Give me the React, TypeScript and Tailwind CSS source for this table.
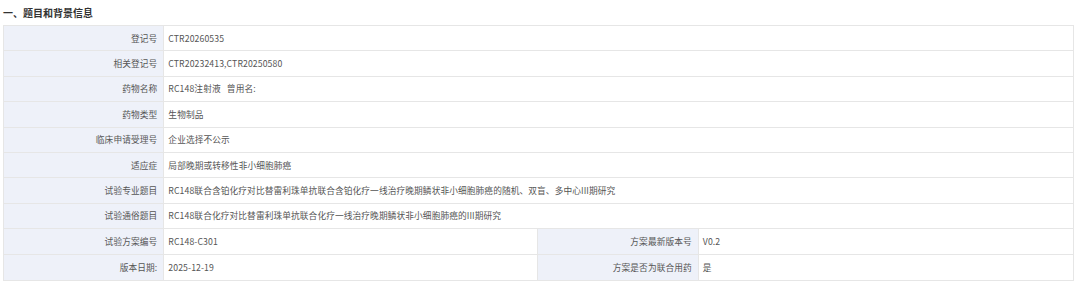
import React from "react";

const font = { fontFamily: '"Noto Sans CJK SC", "Noto Sans", sans-serif' };

type Cell = { label: string; value: string };

const fullRows: Cell[] = [
  { label: "登记号", value: "CTR20260535" },
  { label: "相关登记号", value: "CTR20232413,CTR20250580" },
  { label: "药物名称", value: "RC148注射液\u00a0\u00a0\u00a0曾用名:" },
  { label: "药物类型", value: "生物制品" },
  { label: "临床申请受理号", value: "企业选择不公示" },
  { label: "适应症", value: "局部晚期或转移性非小细胞肺癌" },
  {
    label: "试验专业题目",
    value:
      "RC148联合含铂化疗对比替雷利珠单抗联合含铂化疗一线治疗晚期鳞状非小细胞肺癌的随机、双盲、多中心III期研究",
  },
  {
    label: "试验通俗题目",
    value: "RC148联合化疗对比替雷利珠单抗联合化疗一线治疗晚期鳞状非小细胞肺癌的III期研究",
  },
];

const splitRows: [Cell, Cell][] = [
  [
    { label: "试验方案编号", value: "RC148-C301" },
    { label: "方案最新版本号", value: "V0.2" },
  ],
  [
    { label: "版本日期:", value: "2025-12-19" },
    { label: "方案是否为联合用药", value: "是" },
  ],
];

function Label({ text, w }: { text: string; w: string }) {
  return (
    <div
      className={`${w} shrink-0 h-full flex items-center justify-end pr-[6px] bg-[#eef1f9] border-r border-[#e6e6e6] text-[#555] whitespace-nowrap`}
    >
      {text}
    </div>
  );
}

function Value({ text, w }: { text: string; w: string }) {
  return (
    <div className={`${w} h-full flex items-center pl-[4px] text-[#555] whitespace-nowrap overflow-hidden`}>
      {text}
    </div>
  );
}

export default function App() {
  return (
    <div className="w-[1080px] h-[285px] bg-white overflow-hidden" style={font}>
      <div className="h-[25px] flex items-center pl-[3px] text-[10px] font-bold text-[#333]">
        一、题目和背景信息
      </div>
      <div className="ml-[3px] w-[1071px] border border-[#e6e6e6] text-[8.7px] tracking-[0.1px]">
        {fullRows.map((r) => (
          <div key={r.label} className="h-[25.4px] flex border-b border-[#e6e6e6]">
            <Label text={r.label} w="w-[15%]" />
            <Value text={r.value} w="flex-1" />
          </div>
        ))}
        {splitRows.map((pair, i) => (
          <div
            key={i}
            className={`h-[25.4px] flex ${i === 0 ? "border-b border-[#e6e6e6]" : ""}`}
          >
            <Label text={pair[0].label} w="w-[15%]" />
            <div className="w-[35%] h-full border-r border-[#e6e6e6] flex items-center pl-[4px] text-[#555]">
              {pair[0].value}
            </div>
            <Label text={pair[1].label} w="w-[15%]" />
            <Value text={pair[1].value} w="flex-1" />
          </div>
        ))}
      </div>
    </div>
  );
}
